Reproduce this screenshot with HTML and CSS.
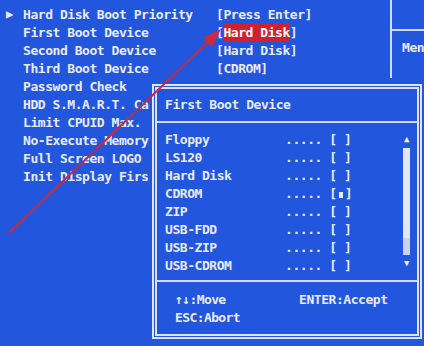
FILE: index.html
```html
<!DOCTYPE html>
<html lang="en">
<head>
    <meta charset="UTF-8">
    <title>Hard Disk Boot Priority</title>
    <link rel="stylesheet" href="styles.css">
</head>
<body>
    <div class="screen">
        <div class="menu">
            <span class="mark">&#9654;</span><span class="label">Hard Disk Boot Priority</span><span class="value">[Press Enter]</span>
            <span class="mark"></span><span class="label">First Boot Device</span><span class="value">[<span class="sel">Hard Disk</span>]</span>
            <span class="mark"></span><span class="label">Second Boot Device</span><span class="value">[Hard Disk]</span>
            <span class="mark"></span><span class="label">Third Boot Device</span><span class="value">[CDROM]</span>
            <span class="mark"></span><span class="label">Password Check</span><span class="value"></span>
            <span class="mark"></span><span class="label">HDD S.M.A.R.T. Ca</span><span class="value"></span>
            <span class="mark"></span><span class="label">Limit CPUID Max.</span><span class="value"></span>
            <span class="mark"></span><span class="label">No-Execute Memory</span><span class="value"></span>
            <span class="mark"></span><span class="label">Full Screen LOGO</span><span class="value"></span>
            <span class="mark"></span><span class="label">Init Display Firs</span><span class="value"></span>
        </div>

        <div class="help">
            <div class="help-top"></div>
            <div class="help-text">Men</div>
        </div>
    </div>

    <div class="dialog">
        <div class="dlg-title">First Boot Device</div>
        <div class="dlg-body">
            <div class="dlg-list">
                <div class="item"><span class="name">Floppy</span><span class="opt">..... [ ]</span></div>
                <div class="item"><span class="name">LS120</span><span class="opt">..... [ ]</span></div>
                <div class="item"><span class="name">Hard Disk</span><span class="opt">..... [ ]</span></div>
                <div class="item"><span class="name">CDROM</span><span class="opt">..... [<span class="dot"></span>]</span></div>
                <div class="item"><span class="name">ZIP</span><span class="opt">..... [ ]</span></div>
                <div class="item"><span class="name">USB-FDD</span><span class="opt">..... [ ]</span></div>
                <div class="item"><span class="name">USB-ZIP</span><span class="opt">..... [ ]</span></div>
                <div class="item"><span class="name">USB-CDROM</span><span class="opt">..... [ ]</span></div>
            </div>
            <div class="scroll">
                <span class="arr">&#9650;</span>
                <div class="thumb"></div>
                <div class="track"></div>
                <span class="arr">&#9660;</span>
            </div>
        </div>
        <div class="dlg-foot">
            <span class="key">&uarr;&darr;:Move</span><span>ENTER:Accept</span>
            <span class="key">ESC:Abort</span><span></span>
        </div>
    </div>

    <svg class="pointer" width="424" height="346" viewBox="0 0 424 346">
        <line x1="9" y1="233" x2="210" y2="40" stroke="#c8283c" stroke-width="2"/>
        <polygon points="221,29 203,38 212,47" fill="#d02a3a"/>
    </svg>
</body>
</html>
```

FILE: styles.css
```css
body {
    margin: 0;
    width: 424px;
    height: 346px;
    overflow: hidden;
    background-color: #2256dc;
    color: #e8ecf6;
    font-family: "DejaVu Sans Mono", "Liberation Mono", monospace;
    font-weight: bold;
    font-size: 13px;
    letter-spacing: -0.45px;
    position: relative;
}

.screen {
    display: flex;
}

.menu {
    display: grid;
    grid-template-columns: 17px 193px 175px;
    grid-auto-rows: 18px;
    align-items: center;
    padding: 5px 0 0 6px;
    white-space: nowrap;
}

.mark {
    font-size: 12px;
}

.sel {
    background-color: #d2202e;
    color: #ffffff;
    padding: 2px 0;
}

.help {
    width: 32px;
    height: 78px;
    border-left: 2px solid #d4dbef;
    margin-left: -1px;
    white-space: nowrap;
}

.help-top {
    height: 29px;
    border-bottom: 2px solid #d4dbef;
}

.help-text {
    padding: 9px 0 0 10px;
}

.dialog {
    position: absolute;
    left: 152px;
    top: 84px;
    width: 260px;
    height: 245px;
    border: 5px double #dfe4f2;
    background-color: #2256dc;
    display: flex;
    flex-direction: column;
}

.dlg-title {
    height: 32px;
    line-height: 32px;
    padding-left: 8px;
    border-bottom: 2px solid #d4dbef;
}

.dlg-body {
    display: flex;
    justify-content: space-between;
    padding: 8px 7px 5px 8px;
    border-bottom: 2px solid #d4dbef;
}

.dlg-list {
    display: flex;
    flex-direction: column;
}

.item {
    height: 18px;
    line-height: 18px;
    display: flex;
    white-space: pre;
}

.name {
    width: 120px;
}

.dot {
    display: inline-block;
    width: 4px;
    height: 6px;
    margin: 0 2px;
    background-color: #e8ecf6;
}

.scroll {
    width: 7px;
    display: flex;
    flex-direction: column;
    align-items: center;
    color: #f2f5fb;
}

.arr {
    font-size: 9px;
    height: 9px;
    line-height: 9px;
    margin-top: 4px;
}

.thumb {
    width: 7px;
    height: 90px;
    margin-top: 4px;
    background-color: #e2e7f4;
}

.track {
    width: 7px;
    height: 17px;
    background-image: radial-gradient(#c9d2ee 0.8px, transparent 0.9px);
    background-size: 2px 2px;
}

.dlg-foot {
    display: grid;
    grid-template-columns: 124px 1fr;
    grid-auto-rows: 18px;
    align-items: center;
    padding: 8px 0 0 18px;
}

.key {
    letter-spacing: -0.6px;
}

.pointer {
    position: absolute;
    left: 0;
    top: 0;
    pointer-events: none;
}
```
